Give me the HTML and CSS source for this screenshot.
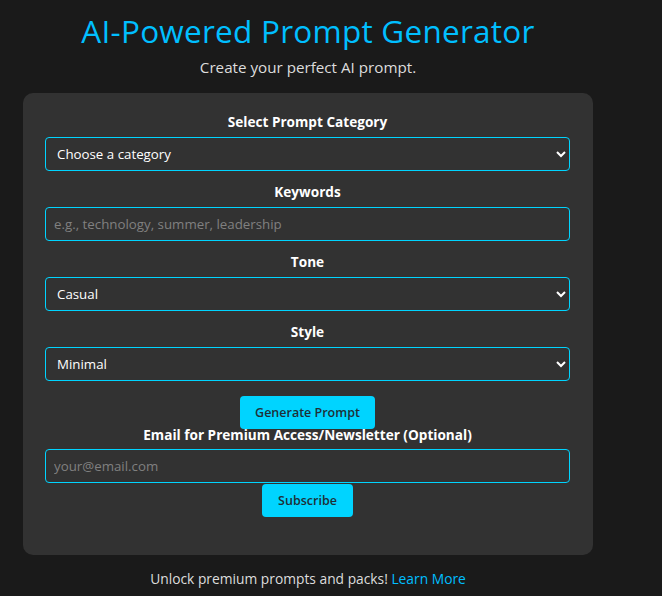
FILE: index.html
```html
<!DOCTYPE html>
<html lang="en">
<head>
<meta charset="utf-8">
<title>AI-Powered Prompt Generator</title>
<link rel="stylesheet" href="styles.css">
</head>
<body>
<main class="page">
  <h1 class="title">AI-Powered Prompt Generator</h1>
  <p class="subtitle">Create your perfect AI prompt.</p>
  <section class="card">
    <label class="label" for="category">Select Prompt Category</label>
    <select id="category" class="field">
      <option>Choose a category</option>
    </select>

    <label class="label" for="keywords">Keywords</label>
    <input id="keywords" class="field" type="text" placeholder="e.g., technology, summer, leadership">

    <label class="label" for="tone">Tone</label>
    <select id="tone" class="field">
      <option>Casual</option>
    </select>

    <label class="label" for="style">Style</label>
    <select id="style" class="field">
      <option>Minimal</option>
    </select>

    <button class="btn btn-generate" type="button">Generate Prompt</button>

    <label class="label label-email" for="email">Email for Premium Access/Newsletter (Optional)</label>
    <input id="email" class="field field-email" type="email" placeholder="your@email.com">
    <button class="btn btn-subscribe" type="button">Subscribe</button>
  </section>
  <p class="footer">Unlock premium prompts and packs! <a href="#" class="link">Learn More</a></p>
</main>
</body>
</html>
```
FILE: styles.css
```css
* { box-sizing: border-box; }
html, body {
  margin: 0;
  padding: 0;
  background: #1a1a1a;
  color: #ffffff;
  font-family: "Open Sans", "Liberation Sans", sans-serif;
}
.page {
  width: 570px;
  margin-left: 23px;
  display: flex;
  flex-direction: column;
  align-items: center;
}
.title {
  margin: 10px 0 0;
  font-size: 31.5px;
  line-height: 42px;
  font-weight: 400;
  color: #00bfff;
  letter-spacing: 0.25px;
}
.subtitle {
  margin: 4px 0 0;
  font-size: 15.2px;
  line-height: 22px;
  color: #dddddd;
}
.card {
  margin-top: 15px;
  width: 570px;
  background: #323232;
  border-radius: 10px;
  padding: 19px 23px 38px 22px;
  display: flex;
  flex-direction: column;
  align-items: center;
}
.label {
  font-size: 13.6px;
  line-height: 20px;
  font-weight: 700;
  color: #ffffff;
  margin-bottom: 5px;
}
.field {
  width: 100%;
  height: 34px;
  background: #323232;
  border: 1px solid #00d4ff;
  border-radius: 4px;
  color: #ffffff;
  font-family: inherit;
  font-size: 13.3px;
  padding: 0 8px;
  margin-bottom: 11px;
  color-scheme: dark;
}
select.field { padding-left: 7px; }
.field::placeholder { color: #808080; }
.btn {
  background: #00d4ff;
  color: #1f2f36;
  border: none;
  border-radius: 4px;
  font-family: inherit;
  font-size: 12.5px;
  font-weight: 600;
  height: 33px;
  padding: 0 15px;
}
.btn-generate { margin-top: 4px; width: 135px; }
.label-email { margin-top: -4px; margin-bottom: 4px; }
.field-email { margin-bottom: 0; }
.btn-subscribe { width: 91px; margin-top: 1px; }
.footer {
  margin: 15px 0 0;
  font-size: 13.8px;
  line-height: 18px;
  color: #dddddd;
}
.link { color: #00bfff; text-decoration: none; }
```
